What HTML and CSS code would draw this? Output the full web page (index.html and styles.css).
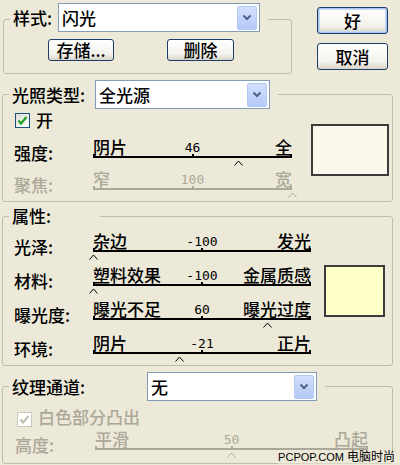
FILE: index.html
```html
<!DOCTYPE html>
<html lang="zh-CN">
<head>
    <meta charset="UTF-8">
    <meta name="viewport" content="width=device-width, initial-scale=1.0">
    <title>光照效果</title>
    <link rel="stylesheet" href="styles.css">
</head>
<body>
    <div class="dialog">
        <div class="top">
            <fieldset class="group group-style">
                <legend class="legend legend-tall">
                    <span class="legend-label w-style">样式:</span>
                    <div class="combo combo-style">
                        <span>闪光</span>
                        <span class="arrow"><svg width="10" height="7" viewBox="0 0 10 7"><polyline points="1.5,1.5 5,5 8.5,1.5" fill="none" stroke="#4d6185" stroke-width="2"/></svg></span>
                    </div>
                </legend>
                <div class="style-buttons">
                    <button class="btn btn-save">存储...</button>
                    <button class="btn btn-delete">删除</button>
                </div>
            </fieldset>
            <div class="actions">
                <button class="btn btn-main btn-default">好</button>
                <button class="btn btn-main">取消</button>
            </div>
        </div>

        <!-- 光照类型 -->
        <fieldset class="group group-light">
            <legend class="legend">
                <span class="legend-label w-light">光照类型:</span>
                <div class="combo combo-light">
                    <span>全光源</span>
                    <span class="arrow"><svg width="10" height="7" viewBox="0 0 10 7"><polyline points="1.5,1.5 5,5 8.5,1.5" fill="none" stroke="#4d6185" stroke-width="2"/></svg></span>
                </div>
            </legend>
            <div class="group-body body-light">
                <div class="rows">
                    <label class="check">
                        <span class="box"><svg width="13" height="13" viewBox="0 0 13 13"><polyline points="2.5,6.5 5,9.5 10.5,3" fill="none" stroke="#21a121" stroke-width="2.2"/></svg></span>
                        开
                    </label>
                    <div class="row">
                        <span class="row-label">强度:</span>
                        <div class="slider slider-light">
                            <div class="slider-labels"><span>阴片</span><span class="value">46</span><span>全</span></div>
                            <div class="track"><span class="thumb" style="left: 73%"><svg width="9" height="6" viewBox="0 0 9 6"><polyline points="0.5,5.5 4.5,1 8.5,5.5" fill="none" stroke="currentColor"/></svg></span></div>
                        </div>
                    </div>
                    <div class="row disabled">
                        <span class="row-label">聚焦:</span>
                        <div class="slider slider-light">
                            <div class="slider-labels"><span>窄</span><span class="value">100</span><span>宽</span></div>
                            <div class="track"><span class="thumb" style="left: 100%"><svg width="9" height="6" viewBox="0 0 9 6"><polyline points="0.5,5.5 4.5,1 8.5,5.5" fill="none" stroke="currentColor"/></svg></span></div>
                        </div>
                    </div>
                </div>
                <div class="swatch swatch-light"></div>
            </div>
        </fieldset>

        <!-- 属性 -->
        <fieldset class="group group-props">
            <legend class="legend">
                <span class="legend-label legend-text">属性:</span>
            </legend>
            <div class="group-body body-props">
                <div class="rows rows-props">
                    <div class="row">
                        <span class="row-label">光泽:</span>
                        <div class="slider slider-props">
                            <div class="slider-labels"><span>杂边</span><span class="value">-100</span><span>发光</span></div>
                            <div class="track"><span class="thumb" style="left: 0%"><svg width="9" height="6" viewBox="0 0 9 6"><polyline points="0.5,5.5 4.5,1 8.5,5.5" fill="none" stroke="currentColor"/></svg></span></div>
                        </div>
                    </div>
                    <div class="row">
                        <span class="row-label">材料:</span>
                        <div class="slider slider-props">
                            <div class="slider-labels"><span>塑料效果</span><span class="value">-100</span><span>金属质感</span></div>
                            <div class="track"><span class="thumb" style="left: 0%"><svg width="9" height="6" viewBox="0 0 9 6"><polyline points="0.5,5.5 4.5,1 8.5,5.5" fill="none" stroke="currentColor"/></svg></span></div>
                        </div>
                    </div>
                    <div class="row">
                        <span class="row-label">曝光度:</span>
                        <div class="slider slider-props">
                            <div class="slider-labels"><span>曝光不足</span><span class="value">60</span><span>曝光过度</span></div>
                            <div class="track"><span class="thumb" style="left: 80%"><svg width="9" height="6" viewBox="0 0 9 6"><polyline points="0.5,5.5 4.5,1 8.5,5.5" fill="none" stroke="currentColor"/></svg></span></div>
                        </div>
                    </div>
                    <div class="row">
                        <span class="row-label">环境:</span>
                        <div class="slider slider-props">
                            <div class="slider-labels"><span>阴片</span><span class="value">-21</span><span>正片</span></div>
                            <div class="track"><span class="thumb" style="left: 39.5%"><svg width="9" height="6" viewBox="0 0 9 6"><polyline points="0.5,5.5 4.5,1 8.5,5.5" fill="none" stroke="currentColor"/></svg></span></div>
                        </div>
                    </div>
                </div>
                <div class="swatch swatch-props"></div>
            </div>
        </fieldset>

        <!-- 纹理通道 -->
        <fieldset class="group group-texture">
            <legend class="legend">
                <span class="legend-label w-texture">纹理通道:</span>
                <div class="combo combo-texture">
                    <span>无</span>
                    <span class="arrow"><svg width="10" height="7" viewBox="0 0 10 7"><polyline points="1.5,1.5 5,5 8.5,1.5" fill="none" stroke="#4d6185" stroke-width="2"/></svg></span>
                </div>
            </legend>
            <div class="group-body body-texture">
                <div class="rows rows-texture">
                    <label class="check check-disabled">
                        <span class="box"><svg width="13" height="13" viewBox="0 0 13 13"><polyline points="2.5,6.5 5,9.5 10.5,3" fill="none" stroke="#c4c1b2" stroke-width="2.2"/></svg></span>
                        白色部分凸出
                    </label>
                    <div class="row disabled">
                        <span class="row-label row-label-texture">高度:</span>
                        <div class="slider slider-texture">
                            <div class="slider-labels"><span>平滑</span><span class="value">50</span><span>凸起</span></div>
                            <div class="track"><span class="thumb" style="left: 50%"><svg width="9" height="6" viewBox="0 0 9 6"><polyline points="0.5,5.5 4.5,1 8.5,5.5" fill="none" stroke="currentColor"/></svg></span></div>
                        </div>
                    </div>
                </div>
            </div>
        </fieldset>
    </div>

    <div class="mark">PCPOP.COM <span class="mark-cn">电脑时尚</span></div>
</body>
</html>
```

FILE: styles.css
```css
body {
    margin: 0;
    width: 400px;
    height: 465px;
    overflow: hidden;
    position: relative;
    background: #ece9d8;
    color: #000;
    font-family: "Noto Sans CJK SC", sans-serif;
    font-size: 17px;
    font-weight: 500;
}

.dialog {
    padding: 3px 0 0 2px;
}

.top {
    display: flex;
    align-items: flex-start;
}

/* group boxes */
.group {
    box-sizing: border-box;
    width: 391px;
    margin: 0;
    padding: 0 2px 0 6px;
    min-width: 0;
    border: 1px solid #c0bcab;
    border-radius: 3px;
}

.group-style {
    width: 289px;
    margin-left: 1px;
    padding-bottom: 12px;
}

.group-light {
    margin-top: 6px;
}

.group-props {
    margin-top: 2px;
}

.group-texture {
    margin-top: 6px;
    height: 92px;
}

.legend {
    display: flex;
    align-items: center;
    padding: 0 8px 0 3px;
    line-height: 24px;
}

.legend-tall {
    padding-bottom: 3px;
}

.legend-label {
    display: inline-block;
}

.w-style { width: 45px; }
.w-light { width: 83px; }
.w-texture { width: 135px; }
.legend-text { width: 80px; }

/* combo boxes */
.combo {
    box-sizing: border-box;
    display: flex;
    align-items: center;
    justify-content: space-between;
    height: 29px;
    padding: 0 2px 0 3px;
    border: 1px solid #7f9db9;
    background: #fff;
}

.combo-style { width: 202px; }
.combo-light { width: 175px; }
.combo-texture { width: 170px; }

.arrow {
    box-sizing: border-box;
    display: flex;
    align-items: center;
    justify-content: center;
    width: 20px;
    height: 24px;
    border: 1px solid #b5c9f5;
    border-radius: 2px;
    background: linear-gradient(#d3e0fd, #b4c9f7);
}

/* buttons */
.btn {
    box-sizing: border-box;
    padding: 0;
    font-family: "Noto Sans CJK SC", sans-serif;
    font-size: 17px;
    font-weight: 500;
    line-height: 18px;
    color: #000;
    border: 1px solid #1d3c6a;
    border-radius: 3px;
    background: linear-gradient(#ffffff, #f3f2ec 70%, #d9d4c8);
}

.style-buttons {
    display: flex;
    gap: 53px;
    margin: 4px 0 0 38px;
}

.btn-save {
    width: 66px;
    height: 22px;
}

.btn-delete {
    width: 67px;
    height: 22px;
}

.actions {
    display: flex;
    flex-direction: column;
    gap: 9px;
    margin: 4px 0 0 25px;
}

.btn-main {
    width: 71px;
    height: 27px;
}

.btn-default {
    box-shadow: inset 0 0 0 1px #a8c1ee, inset 0 0 0 2px #c9d8f4;
}

/* group content */
.group-body {
    display: flex;
    align-items: flex-start;
}

.body-light {
    padding: 2px 0 5px 5px;
}

.body-props {
    padding: 4px 0 5px 5px;
}

.body-texture {
    padding: 7px 0 0 6px;
}

.rows {
    display: flex;
    flex-direction: column;
    gap: 6px;
}

.rows-props {
    gap: 8px;
}

.rows-texture {
    gap: 2px;
}

.check {
    display: flex;
    align-items: center;
    gap: 6px;
    height: 18px;
    margin: 0 0 3px 1px;
    line-height: 18px;
}

.check-disabled {
    margin: 0 0 0 2px;
    padding-top: 2px;
    font-family: "Liberation Sans", "Noto Sans CJK SC", sans-serif;
    color: #aca899;
}

.box {
    box-sizing: border-box;
    display: flex;
    align-items: center;
    justify-content: center;
    width: 15px;
    height: 15px;
    border: 1px solid #1c5180;
    background: linear-gradient(135deg, #dcdcd7, #fff);
}

.check-disabled .box {
    border-color: #cac8bb;
    background: #fff;
}

.row {
    display: flex;
    align-items: flex-end;
}

.row-label {
    width: 79px;
    line-height: 18px;
    padding-bottom: 2px;
}

.row-label-texture {
    width: 80px;
}

.disabled {
    color: #aca899;
}

/* sliders */
.slider {
    position: relative;
    padding-bottom: 6px;
}

.slider-light { width: 199px; }
.slider-props { width: 218px; }
.slider-texture { width: 273px; }

.slider-labels {
    display: grid;
    grid-template-columns: 1fr auto 1fr;
    align-items: end;
    line-height: 18px;
}

.slider-labels span:last-child {
    text-align: right;
}

.value {
    font-family: "DejaVu Sans Mono", monospace;
    font-size: 13px;
    font-weight: 400;
    line-height: 16px;
}

.track {
    position: relative;
    height: 2px;
    background: currentColor;
}

.track::before {
    content: "";
    position: absolute;
    left: 0;
    right: 0;
    top: -2px;
    height: 2px;
    box-sizing: border-box;
    border-left: 2px solid currentColor;
    border-right: 2px solid currentColor;
}

.track::after {
    content: "";
    position: absolute;
    left: 50%;
    top: -2px;
    width: 2px;
    height: 2px;
    margin-left: -1px;
    background: currentColor;
}

.thumb {
    position: absolute;
    top: 3px;
    width: 9px;
    height: 6px;
    margin-left: -4.5px;
    line-height: 0;
}

/* colour swatches */
.swatch {
    box-sizing: border-box;
    height: 52px;
    border: 2px solid #3b3b3b;
}

.swatch-light {
    width: 78px;
    margin: 13px 0 0 19px;
    background: #fcf9ec;
}

.swatch-props {
    width: 61px;
    margin: 33px 0 0 13px;
    background: #ffffc8;
}

/* watermark */
.mark {
    position: absolute;
    right: 5px;
    bottom: 1px;
    font-family: "Liberation Sans", sans-serif;
    font-size: 11px;
    font-weight: 400;
    line-height: 14px;
    background: rgba(236, 233, 216, 0.6);
}

.mark-cn {
    font-family: "Liberation Sans", "Noto Sans CJK SC", sans-serif;
    font-size: 12px;
}
```
